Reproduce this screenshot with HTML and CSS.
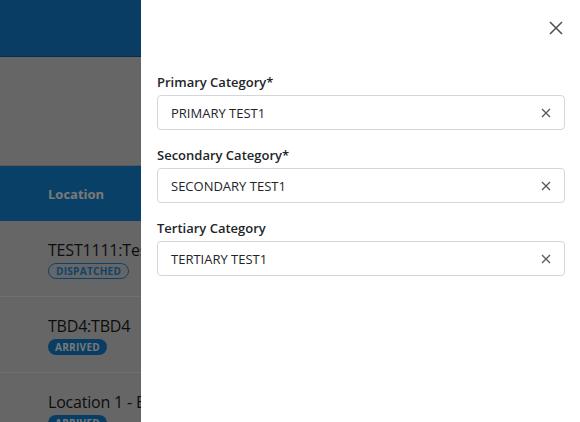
FILE: index.html
```html
<!DOCTYPE html>
<html>
<head>
<meta charset="utf-8">
<link rel="stylesheet" href="styles.css">
</head>
<body>
<div class="app">
  <header class="topbar"></header>
  <div class="toolbar"></div>
  <div class="table">
    <div class="thead"><span class="th">Location</span></div>
    <div class="row">
      <div class="loc">TEST1111:Test location</div>
      <span class="badge outline">DISPATCHED</span>
    </div>
    <div class="row">
      <div class="loc">TBD4:TBD4</div>
      <span class="badge filled">ARRIVED</span>
    </div>
    <div class="row">
      <div class="loc">Location 1 - East</div>
      <span class="badge filled">ARRIVED</span>
    </div>
  </div>
</div>
<div class="backdrop"></div>
<aside class="drawer">
  <div class="drawer-top">
    <button class="close" aria-label="Close">
      <svg width="14" height="14" viewBox="0 0 14 14"><path d="M1 1L13 13M13 1L1 13" stroke="#4a4f55" stroke-width="1.5" fill="none"/></svg>
    </button>
  </div>
  <div class="field">
    <label class="label">Primary Category*</label>
    <div class="input"><span class="value">PRIMARY TEST1</span>
      <svg class="clear" width="10" height="10" viewBox="0 0 10 10"><path d="M1 1L9 9M9 1L1 9" stroke="#55595e" stroke-width="1.3" fill="none"/></svg>
    </div>
  </div>
  <div class="field">
    <label class="label">Secondary Category*</label>
    <div class="input"><span class="value">SECONDARY TEST1</span>
      <svg class="clear" width="10" height="10" viewBox="0 0 10 10"><path d="M1 1L9 9M9 1L1 9" stroke="#55595e" stroke-width="1.3" fill="none"/></svg>
    </div>
  </div>
  <div class="field">
    <label class="label">Tertiary Category</label>
    <div class="input"><span class="value">TERTIARY TEST1</span>
      <svg class="clear" width="10" height="10" viewBox="0 0 10 10"><path d="M1 1L9 9M9 1L1 9" stroke="#55595e" stroke-width="1.3" fill="none"/></svg>
    </div>
  </div>
</aside>
</body>
</html>
```
FILE: styles.css
```css
html, body {
  margin: 0;
  padding: 0;
  height: 100%;
  overflow: hidden;
}
body {
  font-family: "Open Sans", "Noto Sans", sans-serif;
  background: #cdcdcd;
}
.app {
  width: 580px;
}
.topbar {
  height: 56px;
  background: #137bc8;
  border-bottom: 1px solid #0e5a94;
}
.toolbar {
  height: 108px;
  background: #cdcdcd;
}
.thead {
  height: 55px;
  background: #1380cf;
  display: flex;
  align-items: center;
  padding-left: 48px;
  border-top: 1px solid #b0b0b0;
}
.th {
  color: #f2f2f2;
  font-weight: 700;
  font-size: 13px;
}
.row {
  height: 75px;
  border-bottom: 1px solid #e0e0e0;
  padding-left: 48px;
  display: flex;
  flex-direction: column;
  justify-content: center;
  align-items: flex-start;
  box-sizing: content-box;
}
.loc {
  font-size: 16px;
  line-height: 22px;
  color: #1a1a1a;
  white-space: nowrap;
  letter-spacing: -0.2px;
}
.badge {
  margin-top: 2px;
  height: 16px;
  box-sizing: border-box;
  border-radius: 8px;
  font-size: 10px;
  font-weight: 700;
  letter-spacing: 0.3px;
  line-height: 14px;
  padding: 0 7px;
}
.badge.outline {
  border: 1px solid #1a86d6;
  color: #1a86d6;
}
.badge.filled {
  background: #127ac6;
  color: #f0f0f0;
  line-height: 16px;
}
.backdrop {
  position: fixed;
  inset: 0;
  background: rgba(0, 0, 0, 0.5);
}
.drawer {
  position: fixed;
  top: 0;
  bottom: 0;
  left: 141px;
  right: 0;
  background: #fff;
  padding: 0 15px 0 16px;
}
.drawer-top {
  height: 73px;
  display: flex;
  justify-content: flex-end;
}
.close {
  margin-top: 20px;
  margin-right: 1px;
  width: 16px;
  height: 16px;
  padding: 0;
  border: 0;
  background: none;
  display: flex;
  align-items: center;
  justify-content: center;
}
.field {
  margin-bottom: 16px;
}
.label {
  display: block;
  font-size: 13px;
  font-weight: 600;
  line-height: 19px;
  color: #212529;
  margin-bottom: 3px;
}
.input {
  height: 35px;
  box-sizing: border-box;
  border: 1px solid #d3d6da;
  border-radius: 4px;
  display: flex;
  align-items: center;
  justify-content: space-between;
  padding: 0 13px 0 13px;
}
.value {
  font-size: 13px;
  color: #212529;
}
.clear {
  flex: none;
}
```
